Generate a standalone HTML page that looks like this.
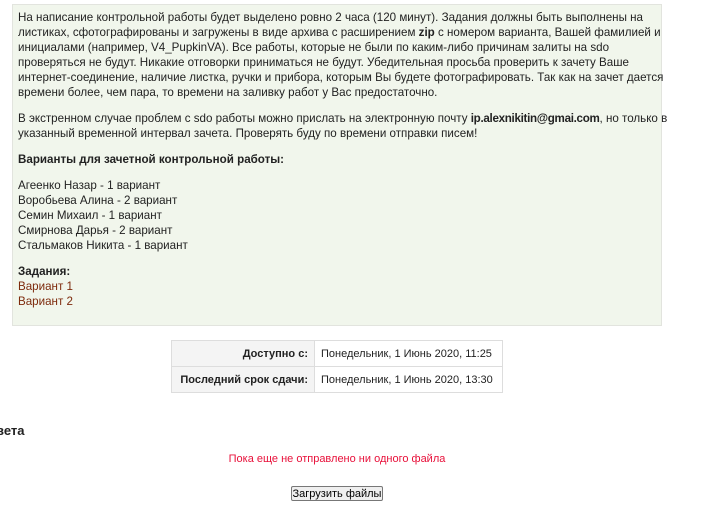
<!DOCTYPE html>
<html><head><meta charset="utf-8"><style>
body{margin:0;width:720px;height:522px;overflow:hidden;background:#fff;font-family:"Liberation Sans",Arial,sans-serif;font-size:11.6px;color:#222;position:relative}
.box{position:absolute;left:12px;top:4px;width:638px;height:310px;padding:5px;background:#f1f6ec;border:1px solid #e2e4de;white-space:nowrap;line-height:15px}
p{margin:0 0 11px}
a{color:#7d2a0c;text-decoration:none}
table{position:absolute;left:171px;top:340px;border-collapse:collapse;white-space:nowrap}
td{border:1px solid #ddd;height:25px;padding:0 6px;font-size:11px}
td.l{background:#f4f4f4;font-weight:bold;text-align:right;width:130px}
td.r{width:175px}
h3{position:absolute;left:-4px;top:423px;margin:0;font-size:13px}
.red{position:absolute;left:0;width:674px;top:453px;text-align:center;color:#e8103a;font-size:11px}
button{position:absolute;left:291px;top:486px;width:92px;height:15px;font:11px "Liberation Sans",Arial,sans-serif;padding:0;border:1px solid #777;background:#efefef;border-radius:2px;white-space:nowrap}
</style></head><body>
<div class="box">
<p>На написание контрольной работы будет выделено ровно 2 часа (120 минут). Задания должны быть выполнены на<br>листиках, сфотографированы и загружены в виде архива с расширением <b>zip</b> с номером варианта, Вашей фамилией и<br>инициалами (например, V4_PupkinVA). Все работы, которые не были по каким-либо причинам залиты на sdo<br>проверяться не будут. Никакие отговорки приниматься не будут. Убедительная просьба проверить к зачету Ваше<br>интернет-соединение, наличие листка, ручки и прибора, которым Вы будете фотографировать. Так как на зачет дается<br>времени более, чем пара, то времени на заливку работ у Вас предостаточно.</p>
<p>В экстренном случае проблем с sdo работы можно прислать на электронную почту <b style="letter-spacing:-0.3px">ip.alexnikitin@gmai.com</b>, но только в<br>указанный временной интервал зачета. Проверять буду по времени отправки писем!</p>
<p><b>Варианты для зачетной контрольной работы:</b></p>
<p>Агеенко Назар - 1 вариант<br>Воробьева Алина - 2 вариант<br>Семин Михаил - 1 вариант<br>Смирнова Дарья - 2 вариант<br>Стальмаков Никита - 1 вариант</p>
<p><b>Задания:</b><br><a>Вариант 1</a><br><a>Вариант 2</a></p>
</div>
<table><tr><td class="l">Доступно с:</td><td class="r">Понедельник, 1 Июнь 2020, 11:25</td></tr>
<tr><td class="l">Последний срок сдачи:</td><td class="r">Понедельник, 1 Июнь 2020, 13:30</td></tr></table>
<h3>вета</h3>
<div class="red">Пока еще не отправлено ни одного файла</div>
<button>Загрузить файлы</button>
</body></html>
